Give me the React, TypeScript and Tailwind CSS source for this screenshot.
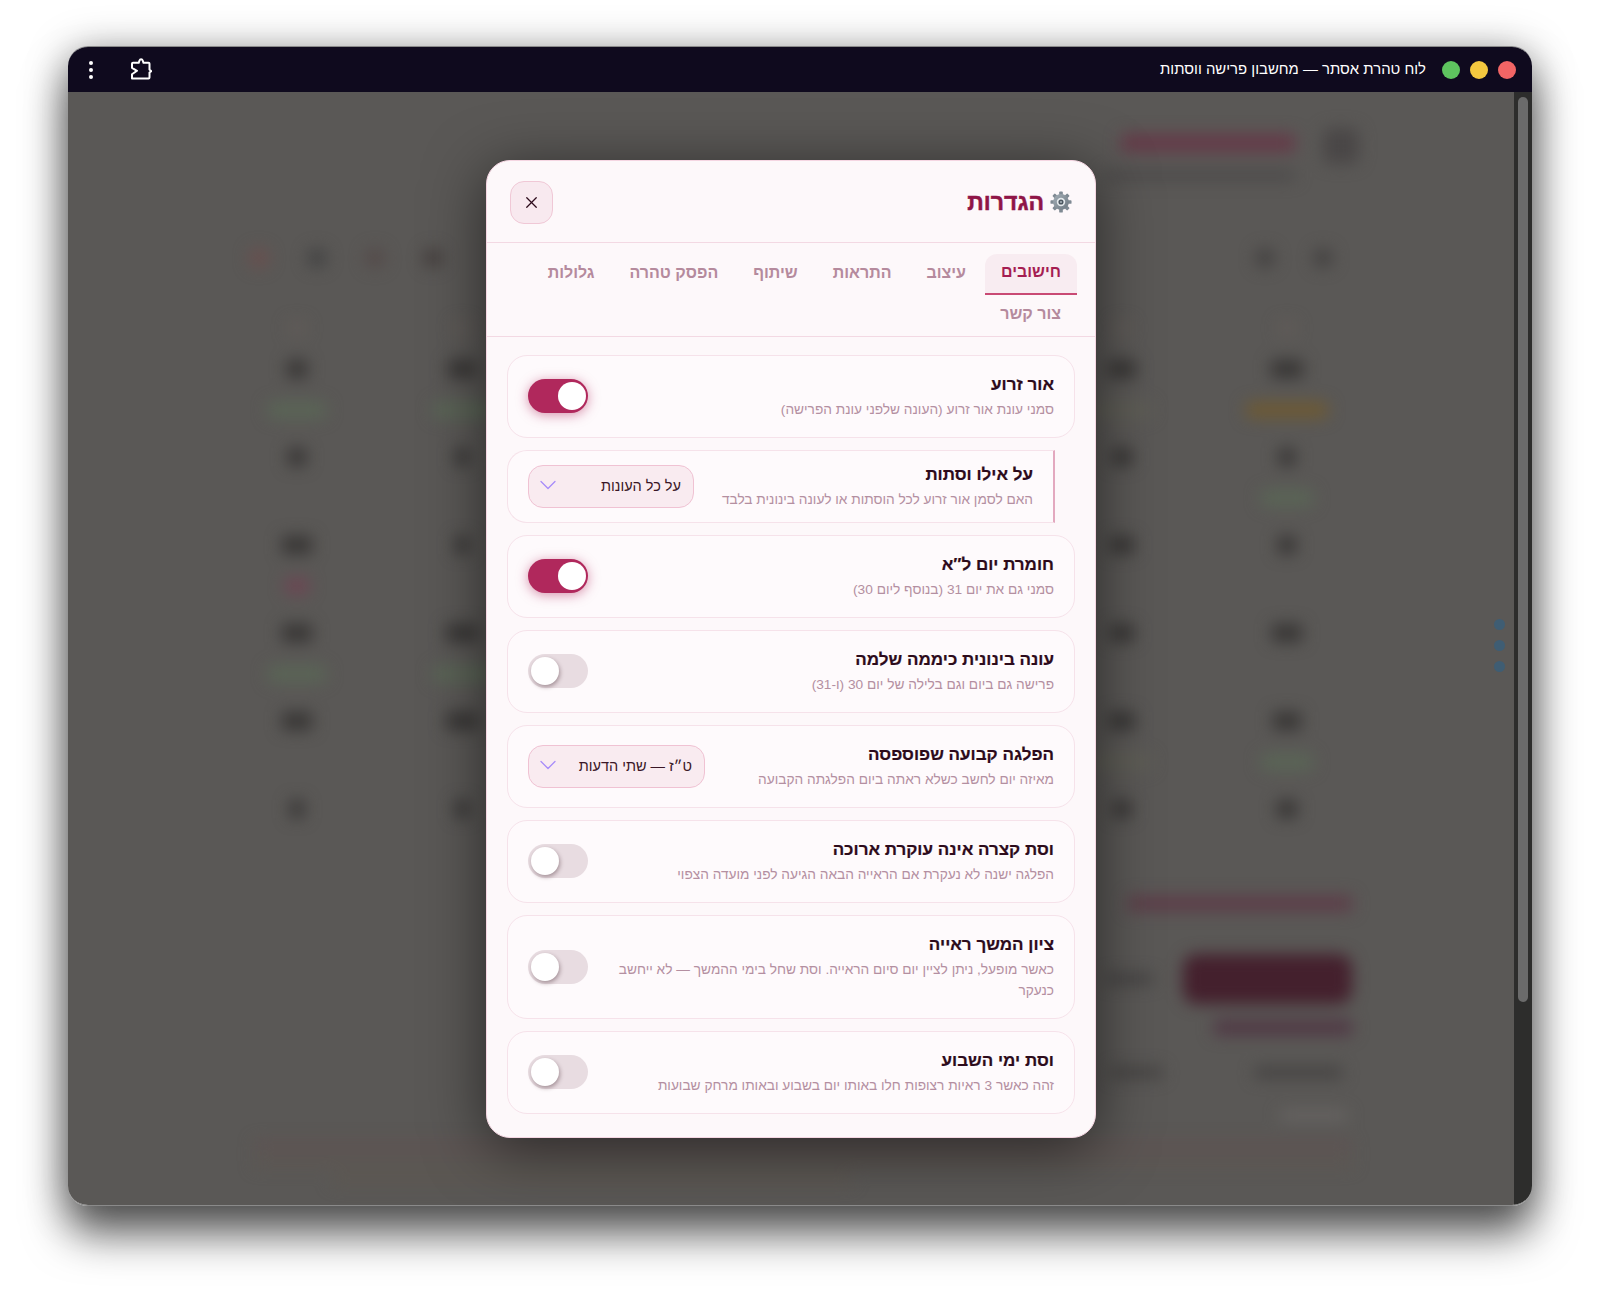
import { ChevronDown, X } from 'lucide-react'

type Blob = { w: number; tone: 'faint' | 'green' | 'amber' | 'pink' }

interface Setting {
  title: string
  desc: string
  on?: boolean
  select?: string
  selectWidth?: string
  nested?: boolean
}

const settings: Setting[] = [
  { title: 'אור זרוע', desc: 'סמני עונת אור זרוע (העונה שלפני עונת הפרישה)', on: true },
  {
    title: 'על אילו וסתות',
    desc: 'האם לסמן אור זרוע לכל הוסתות או לעונה בינונית בלבד',
    select: 'על כל העונות',
    selectWidth: 'w-[166px]',
    nested: true,
  },
  { title: 'חומרת יום ל″א', desc: 'סמני גם את יום 31 (בנוסף ליום 30)', on: true },
  { title: 'עונה בינונית כיממה שלמה', desc: 'פרישה גם ביום וגם בלילה של יום 30 (ו-31)' },
  {
    title: 'הפלגה קבועה שפוספסה',
    desc: 'מאיזה יום לחשב כשלא ראתה ביום הפלגתה הקבועה',
    select: 'ט״ז — שתי הדעות',
    selectWidth: 'w-[177px]',
  },
  { title: 'וסת קצרה אינה עוקרת ארוכה', desc: 'הפלגה ישנה לא נעקרת אם הראייה הבאה הגיעה לפני מועדה הצפוי' },
  {
    title: 'ציון המשך ראייה',
    desc: 'כאשר מופעל, ניתן לציין יום סיום הראייה. וסת שחל בימי ההמשך — לא ייחשב כנעקר',
  },
  { title: 'וסת ימי השבוע', desc: 'זהה כאשר 3 ראיות רצופות חלו באותו יום בשבוע ובאותו מרחק שבועות' },
]

const tabs = ['חישובים', 'עיצוב', 'התראות', 'שיתוף', 'הפסק טהרה', 'גלולות', 'צור קשר']

// calendar behind the dialog, right column first (dir=rtl)
const weeks: { num: number[]; tag: (Blob | null)[] }[] = [
  {
    num: [32, 28, 0, 0, 0, 28, 20],
    tag: [
      { w: 84, tone: 'amber' },
      { w: 60, tone: 'faint' },
      null,
      null,
      null,
      { w: 60, tone: 'green' },
      { w: 60, tone: 'green' },
    ],
  },
  {
    num: [16, 20, 0, 0, 0, 14, 18],
    tag: [{ w: 54, tone: 'green' }, null, null, null, null, null, null],
  },
  {
    num: [18, 24, 0, 0, 0, 14, 30],
    tag: [null, null, null, null, null, null, { w: 26, tone: 'pink' }],
  },
  {
    num: [30, 24, 0, 0, 0, 32, 30],
    tag: [null, null, null, null, null, { w: 60, tone: 'green' }, { w: 60, tone: 'green' }],
  },
  {
    num: [28, 26, 0, 0, 0, 32, 30],
    tag: [{ w: 54, tone: 'green' }, { w: 60, tone: 'faint' }, null, null, null, null, null],
  },
  { num: [20, 18, 0, 0, 0, 14, 14], tag: [null, null, null, null, null, null, null] },
]

const tagTone: Record<Blob['tone'], string> = {
  faint: 'bg-[#5e5d55]',
  green: 'bg-[#5a6656]',
  amber: 'bg-[#6e5a33]',
  pink: 'bg-[#6e4553]',
}

function Toggle({ on }: { on?: boolean }) {
  return (
    <div
      className={[
        'relative h-[34px] w-[60px] shrink-0 rounded-full',
        on
          ? 'bg-[#b0285c] shadow-[0_2px_12px_rgba(176,40,92,0.5)]'
          : 'bg-[#e8dce1]',
      ].join(' ')}
    >
      <span
        className={[
          'absolute top-[3px] size-[28px] rounded-full bg-white',
          on ? 'left-[30px]' : 'left-[3px] shadow-[1px_2px_4px_rgba(60,30,40,0.4)]',
        ].join(' ')}
      />
    </div>
  )
}

function FakeSelect({ value, width }: { value: string; width?: string }) {
  return (
    <div
      className={`flex h-[43px] shrink-0 items-center justify-between rounded-[15px] border border-[#f0c2d3] bg-[#f9ebf0] pr-[12px] pl-[5px] text-[14.5px] text-[#3a1626] ${width}`}
    >
      <span className="pt-[2px]">{value}</span>
      <ChevronDown size={28} strokeWidth={1.1} className="-mt-[2px] text-[#a78bfa]" />
    </div>
  )
}

function Gear() {
  const teeth = [0, 45, 90, 135, 180, 225, 270, 315]
  return (
    <svg viewBox="0 0 24 24" className="size-[22px]">
      <defs>
        <linearGradient id="gearFill" x1="0" y1="0" x2="1" y2="1">
          <stop offset="0" stopColor="#a3aeb6" />
          <stop offset="1" stopColor="#6d7881" />
        </linearGradient>
      </defs>
      {teeth.map(a => (
        <rect key={a} x="10" y="0.5" width="4" height="5" rx="1" fill="#7f8a93" transform={`rotate(${a} 12 12)`} />
      ))}
      <circle cx="12" cy="12" r="8.6" fill="url(#gearFill)" />
      <circle cx="12" cy="12" r="4.6" fill="#e4e9ec" />
      <circle cx="12" cy="12" r="2.8" fill="#4c5760" />
      <circle cx="12" cy="12" r="1.1" fill="#aab4bb" />
    </svg>
  )
}

function SettingCard({ s }: { s: Setting }) {
  return (
    <div
      className={[
        'flex items-center justify-between gap-5 border bg-[#fefafc]',
        s.nested
          ? 'mr-5 rounded-l-[20px] border-[#f6e2ea] border-r-2 border-r-[#e3a9bf] px-5 py-[11px]'
          : 'rounded-[20px] border-[#f6e2ea] px-5 py-4',
      ].join(' ')}
    >
      <div className="min-w-0 flex-1">
        <div className="text-[17px] leading-[26px] font-bold text-[#2d0b1b] [-webkit-text-stroke:0.2px_#2d0b1b]">
          {s.title}
        </div>
        <div className="my-[1px] text-[13.7px] leading-[21px] text-[#b48fa1]">{s.desc}</div>
      </div>
      {s.select ? <FakeSelect value={s.select} width={s.selectWidth} /> : <Toggle on={s.on} />}
    </div>
  )
}

function SettingsDialog() {
  return (
    <div className="w-[610px] overflow-hidden rounded-[24px] border border-[#f5d6e2] bg-[#fdf8fa] shadow-[0_10px_60px_rgba(0,0,0,0.55)]">
      <div className="flex h-[82px] items-center justify-between border-b border-[#f3d9e3] px-[23px] pt-[2px]">
        <div className="flex items-center gap-[6px]">
          <Gear />
          <h2 className="text-[23px] font-bold text-[#8f1547] [-webkit-text-stroke:0.5px_#8f1547]">הגדרות</h2>
        </div>
        <button className="flex size-[43px] items-center justify-center rounded-[14px] border border-[#f0c8d6] bg-[#f8e9ef] text-[#2d0b1b]">
          <X size={19} strokeWidth={1.6} />
        </button>
      </div>

      <div className="flex flex-wrap border-b border-[#f3d9e3] px-[18px] pt-[11px]">
        {tabs.map((t, i) => (
          <div
            key={t}
            className={[
              'flex h-[41px] items-center px-4 pb-[2px] text-[16px]',
              i < 5 ? 'ml-[3px]' : '',
              i === 0
                ? 'rounded-t-[12px] border-b-[2.5px] border-[#c94a74] bg-[#f8ecf1] font-bold text-[#a51d52]'
                : 'font-semibold text-[#b58a9d]',
            ].join(' ')}
          >
            {t}
          </div>
        ))}
      </div>

      <div className="flex flex-col gap-3 px-5 pt-[18px] pb-[23px]">
        {settings.map(s => (
          <SettingCard key={s.title} s={s} />
        ))}
      </div>
    </div>
  )
}

// The page behind the dialog, out of focus
function BlurredPage() {
  return (
    <div className="h-full w-full blur-[8px]">
      <div className="mr-[162px] ml-[146px]">
        <div className="-mr-[7px] flex flex-col items-start pt-[36px]">
          <div className="flex items-start gap-[28px]">
            <div className="size-[36px] rounded-lg bg-[#4a4747]" />
            <div className="mt-[6px] h-[18px] w-[174px] bg-[#653a48]" />
          </div>
          <div className="mt-[7px] mr-[64px] h-[9px] w-[190px] bg-[#4a4848]" />
        </div>

        <div className="mt-[68px] flex items-center justify-between pr-[19px] pl-[35px]">
          <div className="flex gap-[38px]">
            <div className="size-[20px] rounded-full bg-[#444241]" />
            <div className="size-[20px] rounded-full bg-[#444241]" />
          </div>
          <div className="flex gap-[38px]">
            <div className="size-[20px] rounded-full bg-[#443e3d]" />
            <div className="size-[20px] rounded-full bg-[#544a49]" />
            <div className="size-[20px] rounded-full bg-[#434343]" />
            <div className="size-[20px] rounded-full bg-[#6a4f4e]" />
          </div>
        </div>

        <div className="-mr-[17px] mt-[54px] grid grid-cols-7">
          {[0, 1, 2, 3, 4, 5, 6].map(c => (
            <div key={c} className="flex justify-center">
              <div className="h-[12px] w-[16px] bg-[#625c59]" />
            </div>
          ))}
        </div>

        <div className="-mr-[17px] mt-[16px]">
          {weeks.map((w, i) => (
            <div key={i} className="grid h-[88px] grid-cols-7">
              {w.num.map((n, c) => (
                <div key={c} className="flex flex-col items-center pt-[10px]">
                  <div className="h-[18px] bg-[#383635]" style={{ width: n }} />
                  {w.tag[c] && (
                    <div
                      className={`mt-[24px] h-[16px] rounded-full ${tagTone[w.tag[c]!.tone]}`}
                      style={{ width: w.tag[c]!.w }}
                    />
                  )}
                </div>
              ))}
            </div>
          ))}
        </div>

        <div className="mt-[18px] flex flex-col items-start">
          <div className="h-[15px] w-[224px] bg-[#5d3c48]" />
          <div className="mt-[43px] flex items-center gap-[30px]">
            <div className="h-[50px] w-[169px] rounded-[14px] bg-[#44202d]" />
            <div className="h-[10px] w-[46px] bg-[#424040]" />
          </div>
          <div className="mt-[16px] h-[15px] w-[138px] bg-[#503744]" />
          <div className="mt-[32px] flex items-center gap-[93px]">
            <div className="mr-[10px] h-[11px] w-[87px] bg-[#444241]" />
            <div className="h-[11px] w-[50px] bg-[#444241]" />
          </div>
          <div className="mt-[33px] mr-[5px] h-[9px] w-[67px] bg-[#6a6765]" />
        </div>

        <div className="mt-[21px] flex flex-col gap-[8px] pl-[41px]">
          <div className="h-[9px] w-full bg-[#5f5251]" />
          <div className="h-[9px] w-full bg-[#5d5651]" />
          <div className="mr-[500px] h-[9px] w-[520px] bg-[#5d5750]" />
        </div>
      </div>
    </div>
  )
}

export default function App() {
  return (
    <div
      dir="rtl"
      className="h-[1295px] w-[1600px] overflow-hidden bg-white px-[68px] pt-[46px] font-['Liberation_Sans','Noto_Sans',sans-serif]"
    >
      <div className="flex h-[1160px] w-[1464px] flex-col overflow-hidden rounded-[20px] border-t border-b border-[#8a8a8a] shadow-[0_28px_44px_rgba(0,0,0,0.6),0_4px_40px_rgba(0,0,0,0.35)]">
        <div className="flex h-[45px] shrink-0 items-center bg-[#0f0a1e] pr-[16px] pl-[21px]">
          <div className="flex gap-[10px]">
            <span className="size-[18px] rounded-full bg-[#f26565]" />
            <span className="size-[18px] rounded-full bg-[#f4c83f]" />
            <span className="size-[18px] rounded-full bg-[#5ec45f]" />
          </div>
          <span className="mr-[16px] text-[14.9px] text-white">לוח טהרת אסתר — מחשבון פרישה ווסתות</span>
          <div className="mr-auto flex items-center gap-[37px]">
            <svg viewBox="0 0 22 22" className="-mt-[2px] size-[22px]" fill="none" stroke="white" strokeWidth="2" strokeLinejoin="round">
              <path d="M2 20.5h16.5a1 1 0 0 0 1-1v-5l1.800-1.300-1.800-1.700V5.800a1 1 0 0 0-1-1H13.500l-.8-2.300a1.700 1.700 0 0 0-3.200 0l-.8 2.300H3a1 1 0 0 0-1 1v4l5 3-5 3.500z" />
            </svg>
            <div className="flex flex-col gap-[3px]">
              <span className="size-[4px] rounded-full bg-white" />
              <span className="size-[4px] rounded-full bg-white" />
              <span className="size-[4px] rounded-full bg-white" />
            </div>
          </div>
        </div>

        <div className="flex min-h-0 flex-1">
          <div className="w-[18px] shrink-0 bg-[#2d2d2c] px-[4px] pt-[5px]">
            <div className="h-[905px] rounded-full bg-[#6b6b6b]" />
          </div>
          <div className="relative min-w-0 flex-1 overflow-hidden bg-[#5a5856]">
            <BlurredPage />
            <div className="absolute top-[527px] right-[9px] flex flex-col gap-[10px]">
              <span className="size-[11px] rounded-full bg-[#3f5d73]" />
              <span className="size-[11px] rounded-full bg-[#3f5d73]" />
              <span className="size-[11px] rounded-full bg-[#3f5d73]" />
            </div>
            <div className="absolute inset-0 flex items-center justify-center">
              <SettingsDialog />
            </div>
          </div>
        </div>
      </div>
    </div>
  )
}
